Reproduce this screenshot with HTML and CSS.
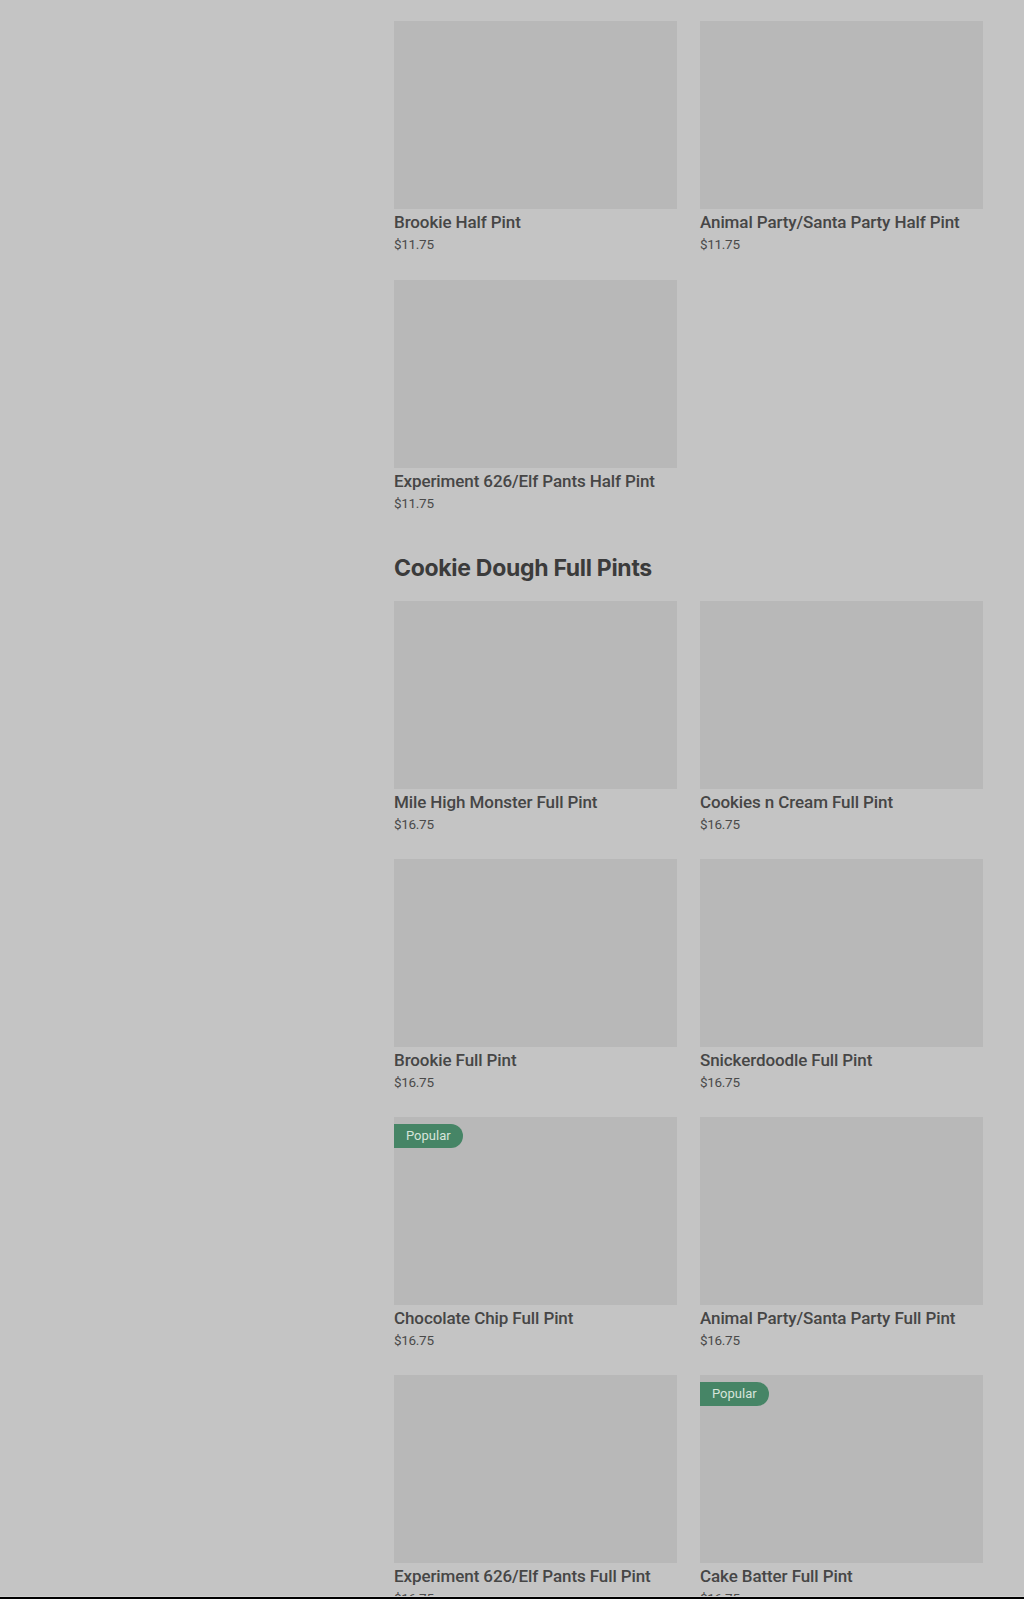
FILE: index.html
```html
<!DOCTYPE html>
<html lang="en">
<head>
    <meta charset="UTF-8">
    <meta name="viewport" content="width=device-width, initial-scale=1.0">
    <title>Menu - Cookie Dough</title>
    <link rel="stylesheet" href="styles.css">
</head>
<body>
    <div class="page">
        <aside class="side"></aside>
        <main class="menu">
            <section class="section">
                <div class="grid">
                    <div class="item">
                        <div class="thumb"></div>
                        <div class="name">Brookie Half Pint</div>
                        <div class="price">$11.75</div>
                    </div>
                    <div class="item">
                        <div class="thumb"></div>
                        <div class="name">Animal Party/Santa Party Half Pint</div>
                        <div class="price">$11.75</div>
                    </div>
                    <div class="item">
                        <div class="thumb"></div>
                        <div class="name">Experiment 626/Elf Pants Half Pint</div>
                        <div class="price">$11.75</div>
                    </div>
                </div>
            </section>
            <section class="section">
                <h2>Cookie Dough Full Pints</h2>
                <div class="grid grid-tight">
                    <div class="item">
                        <div class="thumb"></div>
                        <div class="name">Mile High Monster Full Pint</div>
                        <div class="price">$16.75</div>
                    </div>
                    <div class="item">
                        <div class="thumb"></div>
                        <div class="name">Cookies n Cream Full Pint</div>
                        <div class="price">$16.75</div>
                    </div>
                    <div class="item">
                        <div class="thumb"></div>
                        <div class="name">Brookie Full Pint</div>
                        <div class="price">$16.75</div>
                    </div>
                    <div class="item">
                        <div class="thumb"></div>
                        <div class="name">Snickerdoodle Full Pint</div>
                        <div class="price">$16.75</div>
                    </div>
                    <div class="item">
                        <div class="thumb"><span class="badge">Popular</span></div>
                        <div class="name">Chocolate Chip Full Pint</div>
                        <div class="price">$16.75</div>
                    </div>
                    <div class="item">
                        <div class="thumb"></div>
                        <div class="name">Animal Party/Santa Party Full Pint</div>
                        <div class="price">$16.75</div>
                    </div>
                    <div class="item">
                        <div class="thumb"></div>
                        <div class="name">Experiment 626/Elf Pants Full Pint</div>
                        <div class="price">$16.75</div>
                    </div>
                    <div class="item">
                        <div class="thumb"><span class="badge">Popular</span></div>
                        <div class="name">Cake Batter Full Pint</div>
                        <div class="price">$16.75</div>
                    </div>
                </div>
            </section>
        </main>
    </div>
    <div class="bottom-bar"></div>
</body>
</html>
```

FILE: styles.css
```css
body {
    margin: 0;
    padding: 0;
    background: #c4c4c4;
    color: #444;
    font-family: Roboto, "Liberation Sans", sans-serif;
    overflow: hidden;
}
.page {
    display: flex;
}
.side {
    width: 394px;
    flex-shrink: 0;
}
.menu {
    width: 589px;
    padding-top: 21px;
}
.section {
    margin-bottom: 39px;
}
h2 {
    margin: 0 0 17px;
    font-family: Inter, sans-serif;
    font-size: 23px;
    font-weight: 700;
    line-height: 32px;
    letter-spacing: -0.3px;
    color: #3b3b3b;
}
.grid {
    display: grid;
    grid-template-columns: 283px 283px;
    column-gap: 23px;
    row-gap: 26px;
}
.grid-tight {
    row-gap: 25px;
}
.thumb {
    position: relative;
    height: 188px;
    background: #b8b8b8;
}
.badge {
    position: absolute;
    left: 0;
    top: 7px;
    height: 24px;
    line-height: 24px;
    padding: 0 12px;
    font-size: 13px;
    color: #d6e4da;
    background: #468566;
    border-radius: 0 12px 12px 0;
}
.name {
    margin-top: 1px;
    font-size: 17px;
    font-weight: 500;
    line-height: 24px;
    letter-spacing: -0.1px;
    color: #464646;
}
.price {
    font-size: 13.5px;
    line-height: 20px;
    color: #4a4a4a;
    letter-spacing: -0.3px;
}
.bottom-bar {
    position: fixed;
    left: 0;
    right: 0;
    bottom: 0;
    height: 2px;
    background: #000;
    border-top: 1px solid #cfcfcf;
}
```
